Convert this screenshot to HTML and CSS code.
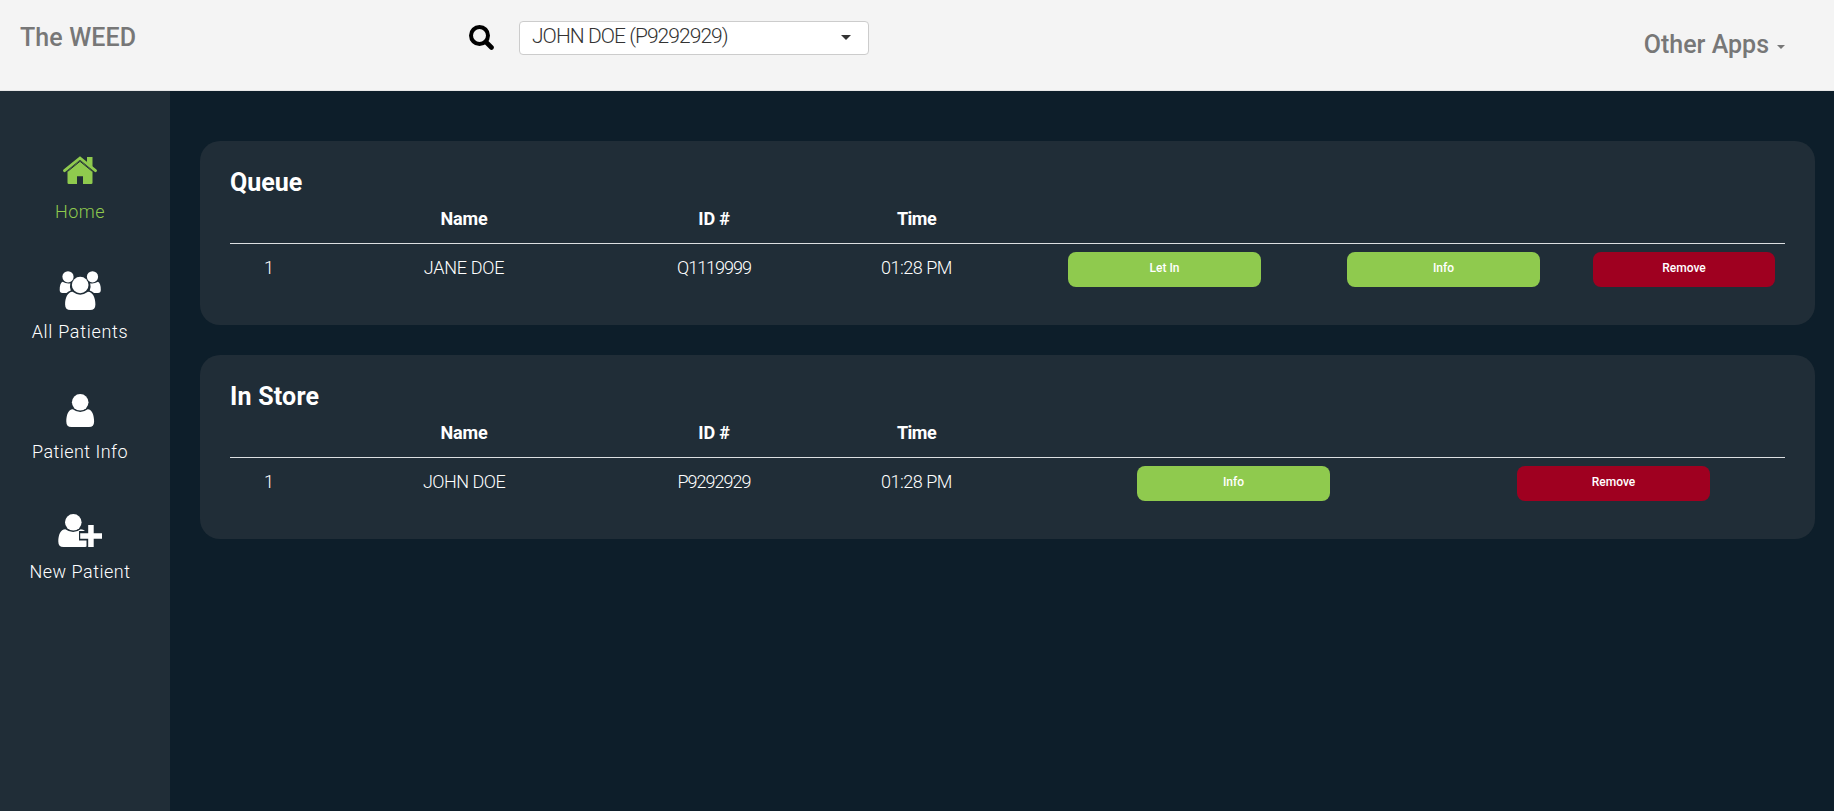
FILE: index.html
```html
<!DOCTYPE html>
<html lang="en">
<head>
<meta charset="utf-8">
<title>The WEED</title>
<link rel="stylesheet" href="styles.css">
</head>
<body>
<header class="topbar">
  <a class="brand">The WEED</a>
  <div class="search">
    <svg class="search-icon" viewBox="0 0 25 25"><circle cx="10.5" cy="10.5" r="8.500" fill="none" stroke="#000" stroke-width="4"/><path d="M17 17l5.500 5.500" stroke="#000" stroke-width="4.600" stroke-linecap="round"/></svg>
    <div class="select"><span class="select-text">JOHN DOE (P9292929)</span><i class="caret"></i></div>
  </div>
  <a class="apps"><span class="apps-text">Other Apps</span><i class="caret caret-small"></i></a>
</header>
<div class="shell">
  <nav class="sidebar">
    <a class="item active">
      <svg class="icon" viewBox="0 0 44 40"><path d="M22 10.600L34.500 21V32.700Q34.500 34 33.200 34H25V26.300H19V34H10.800Q9.500 34 9.500 32.700V21Z" fill="currentColor"/><path d="M29 7h5.500v10l-5.500-4.500z" fill="currentColor"/><path d="M9.500 21.500L22 11.300L34.500 21.500" fill="none" stroke="#202d37" stroke-width="1"/><path d="M6.500 20.700L22 8L37.500 20.700" fill="none" stroke="currentColor" stroke-width="2.900" stroke-linecap="round"/></svg>
      <span class="label l-home">Home</span>
    </a>
    <a class="item">
      <svg class="icon" viewBox="0 0 44 40"><g fill="currentColor"><circle cx="10" cy="6.800" r="5.600"/><circle cx="34.500" cy="6.800" r="5.600"/><path d="M4.500 11.800Q1.700 13 1.700 20Q1.700 23 4.500 23H8.500Q10.500 21 12.800 20.500Q11.300 17 12.300 13.300Q8.500 14 4.500 11.800Z"/><path d="M40 11.800Q42.800 13 42.800 20Q42.800 23 40 23H36Q34 21 31.700 20.500Q33.200 17 32.200 13.300Q36 14 40 11.800Z"/><circle cx="22.200" cy="15" r="8.300"/><path d="M14.500 21.800Q22.200 27.500 30 21.800C35 22 37.400 28 37.400 34.500Q37.400 40 32 40H12.500Q7.100 40 7.100 34.500C7.100 28 9.500 22 14.500 21.800Z"/></g></svg>
      <span class="label l-all">All Patients</span>
    </a>
    <a class="item">
      <svg class="icon" viewBox="0 0 44 40"><g fill="currentColor"><circle cx="22.200" cy="12.300" r="8.300"/><path d="M14.800 19.200Q22.200 24.800 29.600 19.200C34 19.400 36.100 25 36.100 31.500Q36.100 37 31 37H13.400Q8.300 37 8.300 31.500C8.300 25 10.400 19.400 14.800 19.200Z"/></g></svg>
      <span class="label l-info">Patient Info</span>
    </a>
    <a class="item">
      <svg class="icon" viewBox="0 0 44 40"><g fill="currentColor"><circle cx="15.300" cy="12.300" r="8.300"/><path d="M7.300 19.200Q15.200 24.800 22.800 19.200Q25.300 19.200 27 21H21V30.500H28.500V36.400Q27.600 37 25.500 37H5.500Q.3 37 .3 31.500C.3 25 2.500 19.400 7.300 19.200Z"/><path d="M30.200 15h5.500v8.300h8.300v5.400h-8.300v8.300h-5.500v-8.300h-8v-5.400h8z"/></g></svg>
      <span class="label l-new">New Patient</span>
    </a>
  </nav>
  <main class="content">
    <section class="card">
      <h2 class="title t-queue">Queue</h2>
      <div class="row head queue"><span></span><span class="h-name">Name</span><span class="h-id">ID #</span><span class="h-time">Time</span></div>
      <div class="row body queue"><span>1</span><span class="name jane">JANE DOE</span><span class="pid">Q1119999</span><span class="time">01:28 PM</span><button class="btn go">Let In</button><button class="btn go">Info</button><button class="btn stop short">Remove</button></div>
    </section>
    <section class="card">
      <h2 class="title t-store">In Store</h2>
      <div class="row head store"><span></span><span class="h-name">Name</span><span class="h-id">ID #</span><span class="h-time">Time</span></div>
      <div class="row body store"><span>1</span><span class="name">JOHN DOE</span><span class="pid">P9292929</span><span class="time">01:28 PM</span><button class="btn go">Info</button><button class="btn stop">Remove</button></div>
    </section>
  </main>
</div>
</body>
</html>
```
FILE: styles.css
```css
* { box-sizing: border-box; }
body { margin: 0; height: 811px; display: flex; flex-direction: column; overflow: hidden; background: #0d1e2a; color: #fff; font-family: Roboto, "Liberation Sans", sans-serif; font-weight: 300; font-size: 18px; }
.topbar { height: 91px; flex: none; display: flex; align-items: flex-start; justify-content: space-between; background: #f4f4f4; border-bottom: 1px solid #e7e7e7; padding: 21px 49px 0 20px; color: #777; }
.brand { width: 449px; font-size: 25px; line-height: 34px; font-weight: 500; letter-spacing: .1px; }
.search { display: flex; gap: 25px; margin-right: auto; }
.search-icon { width: 25px; height: 25px; margin-top: 4px; }
.select { width: 350px; height: 34px; border: 1px solid #ccc; border-radius: 4px; background: #fff; color: #333; display: flex; justify-content: space-between; padding: 0 17px 0 12px; font-size: 21px; line-height: 29px; }
.select-text { letter-spacing: -.95px; }
.caret { width: 0; height: 0; border: 5px solid transparent; border-top-color: #333; border-bottom: 0; margin-top: 13px; }
.apps { display: flex; gap: 8px; margin-top: 7px; font-size: 25px; line-height: 34px; font-weight: 500; }
.caret-small { border-width: 4px 4px 0; border-top-color: #777; margin-top: 17px; }
.shell { flex: 1; display: flex; }
.sidebar { width: 170px; background: #202d37; padding: 59px 10px 0 0; }
.item { height: 120px; display: flex; flex-direction: column; align-items: center; }
.icon { width: 44px; height: 40px; }
.label { font-size: 18px; line-height: 24px; margin-top: 10px; letter-spacing: .5px; white-space: nowrap; }
.l-all { letter-spacing: .7px; }
.l-info { letter-spacing: .45px; }
.active { color: #8fca4e; }
.content { flex: 1; padding: 50px 19px 0 30px; display: flex; flex-direction: column; gap: 30px; }
.card { height: 184px; border-radius: 20px; background: #202d37; padding: 25px 30px 0; }
.title { margin: 0; font-size: 25px; line-height: 34px; font-weight: 700; }
.t-store { letter-spacing: .2px; }
.row { display: grid; text-align: center; }
.queue { grid-template-columns: 78px 312px 188px 217px 279px 279px 202px; }
.store { grid-template-columns: 78px 312px 188px 217px 417px 343px; }
.head { height: 44px; line-height: 38px; font-weight: 700; font-size: 18px; letter-spacing: -.2px; border-bottom: 1px solid #dcdfe1; }
.h-time { letter-spacing: -.5px; }
.body { padding-top: 8px; line-height: 32px; }
.name { letter-spacing: -.5px; }
.jane { letter-spacing: -.25px; }
.pid { letter-spacing: -1px; }
.time { letter-spacing: -.5px; }
.btn { width: 193px; height: 35px; border: 0; border-radius: 8px; margin: 0 auto; padding: 0 0 3px; color: #fff; font: 500 12px Roboto, "Liberation Sans", sans-serif; }
.short { width: 182px; }
.go { background: #8fca4e; }
.stop { background: #9f0020; }
```
